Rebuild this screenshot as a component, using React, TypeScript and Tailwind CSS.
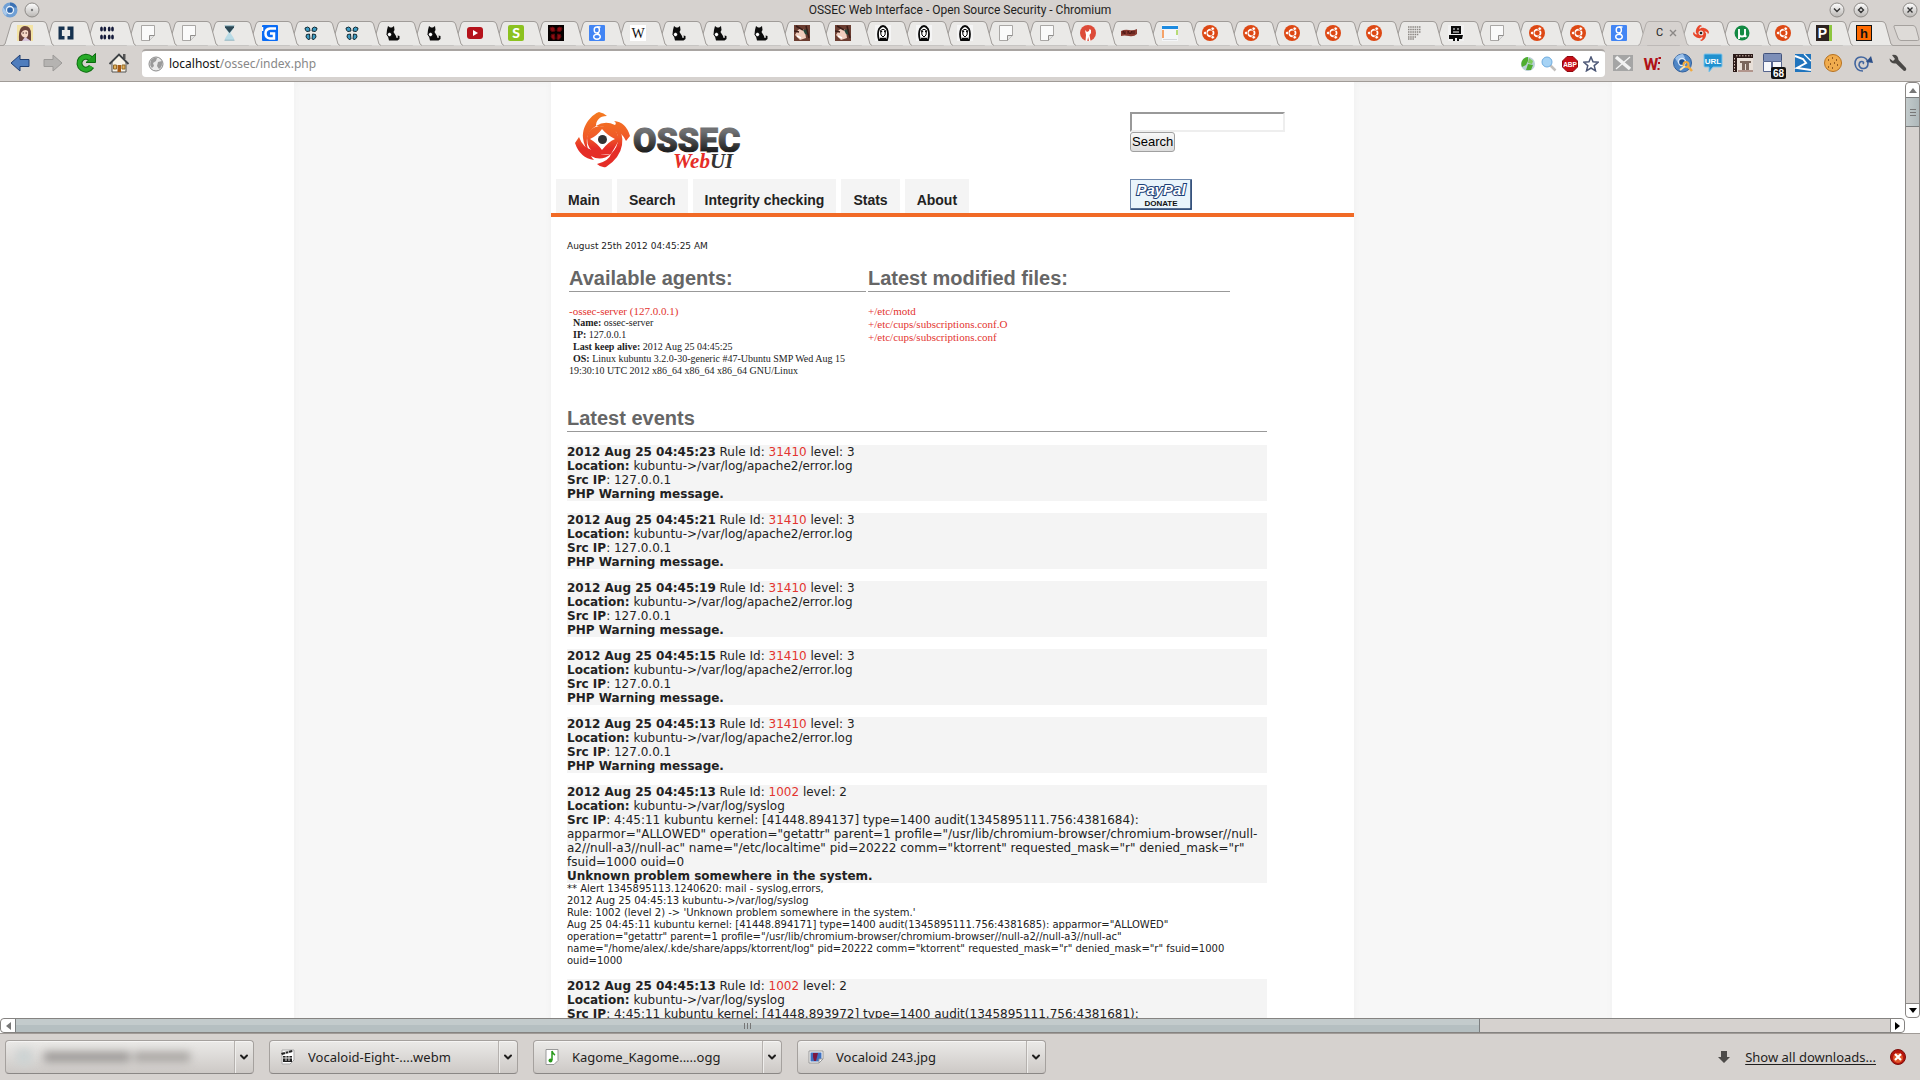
import type { ReactNode } from 'react';
import { ChevronDown } from 'lucide-react';

interface LogEvent {
  time: string;
  rule: string;
  level: number;
  location: string;
  src: string;
  message: string;
  alert?: string[];
}

const APACHE = 'kubuntu->/var/log/apache2/error.log';
const SYSLOG = 'kubuntu->/var/log/syslog';

const phpWarning = (time: string): LogEvent => ({
  time,
  rule: '31410',
  level: 3,
  location: APACHE,
  src: '127.0.0.1',
  message: 'PHP Warning message.',
});

const EVENTS: LogEvent[] = [
  phpWarning('2012 Aug 25 04:45:23'),
  phpWarning('2012 Aug 25 04:45:21'),
  phpWarning('2012 Aug 25 04:45:19'),
  phpWarning('2012 Aug 25 04:45:15'),
  phpWarning('2012 Aug 25 04:45:13'),
  {
    time: '2012 Aug 25 04:45:13',
    rule: '1002',
    level: 2,
    location: SYSLOG,
    src: '4:45:11 kubuntu kernel: [41448.894137] type=1400 audit(1345895111.756:4381684): apparmor="ALLOWED" operation="getattr" parent=1 profile="/usr/lib/chromium-browser/chromium-browser//null-a2//null-a3//null-ac" name="/etc/localtime" pid=20222 comm="ktorrent" requested_mask="r" denied_mask="r" fsuid=1000 ouid=0',
    message: 'Unknown problem somewhere in the system.',
    alert: [
      '** Alert 1345895113.1240620: mail - syslog,errors,',
      '2012 Aug 25 04:45:13 kubuntu->/var/log/syslog',
      "Rule: 1002 (level 2) -> 'Unknown problem somewhere in the system.'",
      'Aug 25 04:45:11 kubuntu kernel: [41448.894171] type=1400 audit(1345895111.756:4381685): apparmor="ALLOWED" operation="getattr" parent=1 profile="/usr/lib/chromium-browser/chromium-browser//null-a2//null-a3//null-ac" name="/home/alex/.kde/share/apps/ktorrent/log" pid=20222 comm="ktorrent" requested_mask="r" denied_mask="r" fsuid=1000 ouid=1000',
    ],
  },
  {
    time: '2012 Aug 25 04:45:13',
    rule: '1002',
    level: 2,
    location: SYSLOG,
    src: '4:45:11 kubuntu kernel: [41448.893972] type=1400 audit(1345895111.756:4381681):',
    message: 'Unknown problem somewhere in the system.',
  },
];

const NAV = ['Main', 'Search', 'Integrity checking', 'Stats', 'About'];

const MODIFIED = ['+/etc/motd', '+/etc/cups/subscriptions.conf.O', '+/etc/cups/subscriptions.conf'];

const AGENT = [
  ['Name:', 'ossec-server'],
  ['IP:', '127.0.0.1'],
  ['Last keep alive:', '2012 Aug 25 04:45:25'],
  ['OS:', 'Linux kubuntu 3.2.0-30-generic #47-Ubuntu SMP Wed Aug 15 19:30:10 UTC 2012 x86_64 x86_64 x86_64 GNU/Linux'],
];

const TABS = [
  'girl', 'brackets', 'dots', 'doc', 'doc', 'hourglass', 'gblue', 'clover', 'clover', 'cat', 'cat', 'video',
  'slime', 'redclover', 'google', 'wiki', 'cat', 'cat', 'cat', 'brunette', 'brunette', 'ghost', 'ghost', 'ghost',
  'doc', 'doc', 'redball', 'jam', 'calendar', 'ubuntu', 'ubuntu', 'ubuntu', 'ubuntu', 'ubuntu', 'graytext', 'robot',
  'doc', 'ubuntu', 'ubuntu', 'google', 'active', 'ossec', 'utorrent', 'ubuntu', 'pnote', 'hnote',
];

function Swirl() {
  return (
    <>
      {[0, 90, 180, 270].map((deg) => (
        <path
          key={deg}
          transform={`rotate(${deg} 28 28)`}
          d="M10 26 C9 12 18 2 25 0 Q30 1 32 4 C25 4 22 9 22 15 Q27 11 35 13 Q45 16 46 24 C40 18 32 16 26 19 Q19 21 18 30 Q13 33 10 26 Z"
        />
      ))}
    </>
  );
}

const CLOVER = (
  <>
    <path d="M2 3 Q5 1 6.500 3 L7 6 L4 6.500 Q2 6 2 3Z M14 3 Q11 1 9.500 3 L9 6 L12 6.500 Q14 6 14 3Z" />
    <path d="M3.500 9.500 L6.500 9 L7 14 L5 14.500 L3 12Z M12.500 9.500 L9.500 9 L9 14 L11 14.500 L13 12Z" />
  </>
);

const FAVICONS: Record<string, ReactNode> = {
  girl: (
    <>
      <rect width="16" height="16" fill="#f3e3a4" />
      <path d="M2 16 Q1 1 8 1 Q14 1 14 9 L14 16Z" fill="#6b443c" />
      <path d="M4 8 Q7 3 11 6 Q12 11 9 13 Q4 12 4 8Z" fill="#f6d9c6" />
      <path d="M5 16 L8 12 L14 16Z" fill="#d9c9dd" />
      <path d="M5.500 8h1.500M8.500 8h1.500" stroke="#4a2a26" />
    </>
  ),
  brackets: (
    <path d="M6.500 3.200H2.200v9.600h4.300M9.500 3.200h4.300v9.600H9.500" fill="none" stroke="#16324f" strokeWidth="3.400" />
  ),
  dots: (
    <g fill="#141a3a">
      {[2.5, 5.800, 10.200, 13.500].map((x) => (
        <g key={x}>
          <ellipse cx={x} cy="4" rx="1.400" ry="2.500" />
          <ellipse cx={x} cy="12" rx="1.400" ry="2.500" />
        </g>
      ))}
    </g>
  ),
  doc: (
    <>
      <path d="M1.500 .5h13v10l-5 5h-8z" fill="#fafafa" stroke="#a9a7a5" />
      <path d="M14.500 10.500h-5v5" fill="#e4e4e4" stroke="#8f8d8b" />
    </>
  ),
  hourglass: (
    <>
      <path d="M4 1h9v1.500L9.500 8 13 13.500V15H4v-1.500L7.500 8 4 2.500z" fill="#b9dbe6" />
      <path d="M4 1h9v1.500L8.500 8 4 2.500z" fill="#2c4855" />
      <path d="M3.500 .8h10M3.500 15.200h10" stroke="#8fb4c0" />
    </>
  ),
  gblue: (
    <>
      <rect width="16" height="16" rx="1" fill="#0a6cf5" />
      <path d="M14 3.500H8Q3.500 4 3.500 8.500T8 13.500h4V8.500H8M0 6V2" fill="none" stroke="#fff" strokeWidth="2.500" />
    </>
  ),
  clover: <g fill="#3d9cc4" stroke="#132a33">{CLOVER}</g>,
  redclover: (
    <>
      <rect width="16" height="16" fill="#050000" />
      <g fill="#8c0d12" stroke="#5c060a">{CLOVER}</g>
    </>
  ),
  cat: (
    <>
      <path d="M3 1l2 1.500h2L9 1l.5 4-1 2 2.500 4 .5 2 1.500-.5-.5-2 2 .5v3l-2 1.500H4l-1-4-1.500-2L2 5z" fill="#0b0b0b" />
      <circle cx="4.500" cy="9.500" r="2.200" fill="#fff" stroke="#0b0b0b" />
    </>
  ),
  video: (
    <>
      <rect y="2" width="16" height="12" rx="3" fill="#b5121b" />
      <path d="M6 5l5 3-5 3z" fill="#fff" />
    </>
  ),
  slime: (
    <>
      <rect width="16" height="16" rx="2" fill="#8cc220" />
      <text x="8" y="13" textAnchor="middle" fontSize="14" fontWeight="900" fill="#fff" fontFamily="Lato, sans-serif">S</text>
    </>
  ),
  google: (
    <>
      <rect width="16" height="16" rx="1" fill="#4285f4" />
      <g fill="none" stroke="#fff" strokeWidth="1.400">
        <ellipse cx="7.800" cy="5" rx="2.600" ry="3" />
        <ellipse cx="8" cy="11.800" rx="3.300" ry="2.400" />
        <path d="M8 2h3.500M8 8q2 1 2.500 2" />
      </g>
    </>
  ),
  wiki: (
    <>
      <rect width="16" height="16" fill="#fff" />
      <text x="8" y="13" textAnchor="middle" fontSize="14" fill="#111" fontFamily="Liberation Serif, serif">W</text>
    </>
  ),
  brunette: (
    <>
      <rect width="16" height="16" fill="#6b3d31" />
      <path d="M4 5 Q8 2 11 6 L12 13 6 15 1 10Z" fill="#f0cdbd" />
      <path d="M9 5l5-1 0 6-3-1z" fill="#27463a" />
      <path d="M2 1l7 4M0 6l5 1M12 1l3 12" stroke="#3a1d18" strokeWidth="1.500" />
      <path d="M3 11l4 2" stroke="#fff" strokeWidth="1.500" />
    </>
  ),
  ghost: (
    <>
      <rect width="16" height="16" fill="#f5f5f5" />
      <path d="M4 4 Q8-2 12 4 Q14 9 12 15H4Q2 9 4 4Z" fill="#fff" stroke="#080808" strokeWidth="1.800" />
      <path d="M5.500 5.500 Q8 3 10.500 5.500 L10 10 8 12 6 10z" fill="#fff" stroke="#080808" />
      <path d="M6 6.500h1.200M9 6.500h1.200M5 13.500h6" stroke="#080808" strokeWidth="1.400" />
    </>
  ),
  redball: (
    <>
      <circle cx="8" cy="8" r="8" fill="#dd4b39" />
      <path d="M5 5l2 2 2-1 .5-2 1.500 1v3l-1.500 2 1 6H9l-.800-4-1 4H5.500l.5-6z" fill="#fff" />
    </>
  ),
  jam: (
    <>
      <path d="M0 6q4-2 8-1t8-1v5q-3 3-8 2t-8 0z" fill="#8a3a30" />
      <path d="M2 9V6l2 3V6M7 9V6l2 3 2-3v3M13 6v3" stroke="#4a1512" fill="none" />
    </>
  ),
  calendar: (
    <>
      <rect width="16" height="16" fill="#f4f6f8" />
      <rect y="1" width="16" height="3" fill="#1d8be0" />
      <rect y="5" width="2" height="8" fill="#f5a36a" />
      <rect x="14" y="5" width="2" height="5" fill="#b7dc78" />
      <path d="M1 14.500h14" stroke="#d3d6da" />
    </>
  ),
  ubuntu: (
    <>
      <circle cx="8" cy="8" r="8" fill="#dd4814" />
      <circle cx="8.300" cy="8" r="3.300" fill="none" stroke="#fff" strokeWidth="1.700" />
      <g fill="#fff" stroke="#dd4814" strokeWidth=".8">
        <circle cx="3.200" cy="8" r="1.800" />
        <circle cx="10.700" cy="3.700" r="1.800" />
        <circle cx="10.700" cy="12.300" r="1.800" />
      </g>
    </>
  ),
  graytext: (
    <path d="M1 2h13M1 4.500h13M1 7h13M1 9.500h11M1 12h8M1 14h6" stroke="#8a8682" strokeWidth="1.300" strokeDasharray="1.500 .7" />
  ),
  robot: (
    <>
      <rect width="16" height="16" fill="#f1f1f1" />
      <path d="M3 1h10v8H3zM1 10h14l-1 4h-3v2h-2v-3H7v3H5v-2H1z" fill="#0a0a0a" />
      <path d="M5 4h2M9 4h2M5 7h6" stroke="#fff" strokeWidth="1.200" />
    </>
  ),
  ossec: (
    <g fill="#e8472b">
      <g transform="scale(.285)"><Swirl /></g>
      <circle cx="8" cy="8" r="1.300" fill="#222" />
    </g>
  ),
  utorrent: (
    <>
      <circle cx="8" cy="8" r="7.500" fill="#138a43" />
      <path d="M5 4v5q0 2.500 3 2.500t3-2.500V4M5 9v5M11 10l1 2" fill="none" stroke="#fff" strokeWidth="1.900" />
    </>
  ),
  pnote: (
    <>
      <rect width="13" height="16" fill="#2c2320" />
      <rect x="13" width="3" height="16" fill="#8dc63f" />
      <text x="6.500" y="13" textAnchor="middle" fontSize="14" fontWeight="700" fill="#fff" fontFamily="Liberation Sans, sans-serif">P</text>
    </>
  ),
  hnote: (
    <>
      <rect x=".5" y=".5" width="15" height="15" fill="#ff6a00" stroke="#111" />
      <text x="8" y="13" textAnchor="middle" fontSize="13" fontWeight="700" fill="#111" fontFamily="Liberation Sans, sans-serif">h</text>
    </>
  ),
};

const GLOBE_LAND = 'M3 4 Q6 1 9 2 L8 5 5 7 6 10 4 12 Q1 9 3 4Z M10 6l4-1q1 5-3 8l-2-3z';

const TOOL_ICONS: Record<string, ReactNode> = {
  back: (
    <path d="M1 10 L10 2v4.500h9v7h-9V18z" fill="#4f7dbd" stroke="#1f3f73" strokeLinejoin="round" />
  ),
  forward: (
    <path d="M19 10 L10 2v4.500H1v7h9V18z" fill="#b5b3b1" stroke="#9c9a98" strokeLinejoin="round" />
  ),
  reload: (
    <>
      <path d="M15.500 13.500 A6.500 6.500 0 1 1 14.500 5.500" fill="none" stroke="#0d6b10" strokeWidth="6" />
      <path d="M10 9.500h9.500V.5z" fill="#1b9a1e" stroke="#0d6b10" />
      <path d="M15.500 13.500 A6.500 6.500 0 1 1 14.500 5.500" fill="none" stroke="#27ab28" strokeWidth="4" />
    </>
  ),
  home: (
    <>
      <rect x="14" y="1" width="2.500" height="5" fill="#555" />
      <path d="M3 9 L10 2l7 7v10H3z" fill="#f6f2e8" stroke="#555" />
      <path d="M.5 11 L10 1.500 19.500 11" fill="none" stroke="#3f4347" strokeWidth="1.800" />
      <rect x="8.500" y="12" width="3.500" height="7" fill="#a65a15" />
      <path d="M4.500 12h3v4h-3zM13 12h3v4h-3z" fill="#e8b25a" stroke="#8f6a2a" />
    </>
  ),
  xmark: (
    <>
      <rect y="2" width="20" height="16" fill="#a5a5a5" />
      <path d="M3 4l14 12" stroke="#f3f3f3" strokeWidth="3.500" />
      <path d="M17 4L3 16" stroke="#f3f3f3" strokeWidth="1.300" />
    </>
  ),
  wred: (
    <>
      <text x="8" y="17" textAnchor="middle" fontSize="17" fontWeight="700" fill="#b01217" fontFamily="Roboto, sans-serif">W</text>
      <path d="M15.500 5h2.500M15 10h2M14.500 16h2" stroke="#b01217" strokeWidth="2.200" />
    </>
  ),
  chromekey: (
    <>
      <circle cx="9.500" cy="10" r="9" fill="#4f86c6" stroke="#2f5f9c" />
      <path d="M2 5Q6 1 10 1l2 4-7 5z" fill="#9cc1ea" />
      <circle cx="9" cy="9" r="3.500" fill="#1d4e8f" stroke="#dceafa" strokeWidth="1.300" />
      <circle cx="13" cy="11.500" r="2.500" fill="none" stroke="#f2a93b" strokeWidth="2" />
      <path d="M14.500 13l4.500 5" stroke="#f2a93b" strokeWidth="2.500" />
      <path d="M12 13l-5 4" stroke="#f6e2b6" strokeWidth="2" />
    </>
  ),
  url: (
    <>
      <path d="M2 1h16q1 0 1 1v11q0 1-1 1h-8l-4 5v-5H2q-1 0-1-1V2q0-1 1-1z" fill="#2191cf" stroke="#7cc3ea" />
      <text x="10" y="11" textAnchor="middle" fontSize="8" fontWeight="700" fill="#fff" fontFamily="Liberation Sans, sans-serif">URL</text>
    </>
  ),
  film: (
    <>
      <rect y="1" width="20" height="18" fill="#e9e0d8" />
      <path d="M0 1h20v4H4v14H0z" fill="#2b1a18" />
      <path d="M1.500 5v13M3 2.800h16" stroke="#d9c3b8" strokeDasharray="1.500 1.500" />
      <path d="M7 8h11v2h-2v7h-3v-6h-1v6H9v-7H7z" fill="#7a675d" />
      <path d="M5 18h15" stroke="#7a4a40" />
    </>
  ),
  tabcount: (
    <>
      <rect x=".5" y=".5" width="18" height="8" rx="1" fill="#7d8fb8" stroke="#43537c" />
      <path d="M.5 8.500h8v10h-8zM9.500 8.500h9v8h-9z" fill="#f7f8fb" stroke="#56658e" />
      <rect x="8" y="14" width="15" height="12" rx="2" fill="#111" />
      <text x="15.500" y="23.500" textAnchor="middle" fontSize="10" fontWeight="700" fill="#fff" fontFamily="Liberation Sans, sans-serif">68</text>
    </>
  ),
  sigma: (
    <>
      <rect x="2" y="1" width="16" height="18" fill="#1f74bd" />
      <path d="M2 3l8 3 3 4-9 5 14 2" fill="none" stroke="#fff" strokeWidth="2" />
      <path d="M11 1l7 7" stroke="#fff" strokeWidth="1.300" />
    </>
  ),
  cookie: (
    <>
      <circle cx="10" cy="10" r="8.500" fill="#f0ac4e" stroke="#b8721f" />
      <path d="M5 7h1M9 5h1M13 7h1M7 11h1M11 10h1M14 12h1M9 15h1M5 14h1" stroke="#7a4312" strokeWidth="1.500" />
    </>
  ),
  spiral: (
    <>
      <path d="M10 11q1.500-2-1-2.500T6 12q1 4 5 3.500T15 10Q14 4 8 4T2 11q1 7 8 7" fill="none" stroke="#42669f" strokeWidth="1.600" />
      <path d="M13 9l5-6 2 7z" fill="#2c4f88" />
    </>
  ),
  wrench: (
    <path d="M4 2 Q10 1 10.500 7 L18 15 Q19 18 16 18 L8 10.500 Q2 11 1.500 5.500 L5 8 7 6z" fill="#4a4846" />
  ),
};

const EXTENSIONS = [
  ['xmark', 'Marks'], ['wred', 'Words'], ['chromekey', 'Keys'], ['url', 'Shortener'], ['film', 'Pictures'],
  ['tabcount', 'Tab count'], ['sigma', 'Launcher'], ['cookie', 'Cookies'], ['spiral', 'Spiral'],
];

function ToolButton({ icon, label }: { icon: string; label: string }) {
  return (
    <button aria-label={label} className="shrink-0">
      <svg viewBox="0 0 20 20" className="h-5 w-5 overflow-visible">{TOOL_ICONS[icon]}</svg>
    </button>
  );
}

function WindowButton({ label, children }: { label: string; children: ReactNode }) {
  return (
    <button aria-label={label} className="shrink-0">
      <svg viewBox="0 0 16 16" className="h-4 w-4">
        <defs>
          <linearGradient id="knob" x2="0" y2="1">
            <stop offset="0" stopColor="#ffffff" />
            <stop offset="1" stopColor="#b9b6b3" />
          </linearGradient>
        </defs>
        <circle cx="8" cy="8" r="7" fill="url(#knob)" stroke="#8d8a87" />
        <g fill="none" stroke="#333" strokeWidth="1.400">{children}</g>
      </svg>
    </button>
  );
}

function TitleBar() {
  return (
    <div className="flex h-[21px] shrink-0 items-center px-[2px] pb-px">
      <div className="flex flex-1 items-center gap-[6px]">
        <svg viewBox="0 0 16 16" className="h-4 w-4">
          <circle cx="8" cy="8" r="7.500" fill="#6f9fd4" />
          <path d="M8 .5a7.500 7.500 0 0 1 7 5H8z" fill="#3c72b4" />
          <path d="M1 5l4 6-1 3Q-1 10 1 5z" fill="#a9c8ea" />
          <circle cx="8" cy="8" r="3.500" fill="#2f66ab" stroke="#e9f2fb" strokeWidth="1.300" />
        </svg>
        <WindowButton label="Window menu"><circle cx="8" cy="8" r=".5" stroke="#777" /></WindowButton>
      </div>
      <h1 className="font-[Roboto,sans-serif] text-[12px] leading-4 text-[#1f1e1d]">
        OSSEC Web Interface - Open Source Security - Chromium
      </h1>
      <div className="flex flex-1 items-center justify-end gap-2">
        <WindowButton label="Minimize"><path d="M5 6.500l3 3 3-3" /></WindowButton>
        <WindowButton label="Maximize"><path d="M8 5.500l2.500 2.500L8 10.500 5.500 8z" /></WindowButton>
        <span className="w-[17px]" />
        <WindowButton label="Close"><path d="M5.500 5.500l5 5M10.500 5.500l-5 5" /></WindowButton>
      </div>
    </div>
  );
}

function TabStrip() {
  return (
    <div className="flex h-[25px] shrink-0 border-b border-[#a5a19e] pl-[3px]">
      {TABS.map((tab, i) => {
        const active = tab === 'active';
        return (
          <button
            key={i}
            aria-label={active ? 'Current tab' : `Tab ${i + 1}`}
            className="relative flex min-w-0 flex-1 items-center pl-[14px]"
            style={{ zIndex: active ? 60 : TABS.length - i }}
          >
            <svg viewBox="0 0 52 25" className="absolute top-0 left-0 h-[25px] w-[52px]">
              <path
                d="M0 24.500 L2 23 L8 3 Q9 .5 11 .5 H40 Q42.500 .5 43.500 3 L49 23 L51 24.500"
                fill={active ? '#d6d2cf' : '#eae9e7'}
                stroke={active ? '#b3afac' : '#a09c99'}
              />
            </svg>
            {active ? (
              <span className="relative flex items-center gap-[6px] pl-1 font-[Roboto,sans-serif] text-[11px] leading-4 text-[#222]">
                <span>C</span>
                <svg viewBox="0 0 8 8" className="h-2 w-2"><path d="M1 1l6 6M7 1L1 7" stroke="#8b8886" strokeWidth="1.400" /></svg>
              </span>
            ) : (
              <svg viewBox="0 0 16 16" className="relative h-4 w-4 shrink-0">{FAVICONS[tab]}</svg>
            )}
          </button>
        );
      })}
      <button aria-label="New tab" className="flex w-[37px] shrink-0 items-center justify-end">
        <svg viewBox="0 0 28 18" className="h-[18px] w-7">
          <path d="M3 1.500h18q2 0 3 2.500l3 11q0 1.500-1.500 1.500H9q-2 0-3-2.500L2 3q-.5-1.500 1-1.500z" fill="#dedbd8" stroke="#a5a19e" />
        </svg>
      </button>
    </div>
  );
}

function Toolbar() {
  return (
    <div className="flex h-9 shrink-0 items-center border-b border-[#a09b97] pr-3 pb-[2px] pl-[10px]">
      <div className="flex items-center gap-[13px]">
        <ToolButton icon="back" label="Back" />
        <ToolButton icon="forward" label="Forward" />
        <ToolButton icon="reload" label="Reload" />
        <ToolButton icon="home" label="Home" />
      </div>
      <div className="ml-[13px] flex h-7 flex-1 items-center gap-[5px] rounded-sm border-t-2 border-[#a9a5a2] bg-white px-[6px]">
        <svg viewBox="0 0 16 16" className="h-4 w-4 shrink-0">
          <circle cx="8" cy="8" r="7" fill="#e9e9e9" stroke="#8b8b8b" />
          <path d={GLOBE_LAND} fill="#9a9a9a" />
        </svg>
        <div aria-label="Address" className="min-w-0 flex-1 font-['Noto_Sans',sans-serif] text-[12px] leading-4 text-[#888]">
          <span className="text-[#111]">localhost</span>/ossec/index.php
        </div>
        <svg viewBox="0 0 16 16" className="h-4 w-4 shrink-0">
          <circle cx="8" cy="8" r="7" fill="#b9cfd6" />
          <path d="M8 1a7 7 0 0 0-6 10l4-2 2-4zM8 8l5 1-2 5H6z" fill="#4fae2f" />
          <path d="M9 2l4 3-1 3-4-1z" fill="#7dcc5c" />
        </svg>
        <svg viewBox="0 0 16 16" className="h-4 w-4 shrink-0">
          <path d="M9 9l5.500 5.500" stroke="#c3c0bd" strokeWidth="2.500" />
          <circle cx="6" cy="6" r="5" fill="#a6d3f5" stroke="#6facdf" />
        </svg>
        <svg viewBox="0 0 16 16" className="h-4 w-4 shrink-0">
          <path d="M5 .5h6L15.500 5v6L11 15.500H5L.5 11V5z" fill="#c70d16" stroke="#8e0a10" />
          <text x="8" y="10.500" textAnchor="middle" fontSize="6.500" fontWeight="700" fill="#fff" fontFamily="Liberation Sans, sans-serif">ABP</text>
        </svg>
        <button aria-label="Bookmark">
          <svg viewBox="0 0 16 16" className="h-4 w-4">
            <path d="M8 1l2 4.800 5.200.4-4 3.400 1.300 5.200L8 12l-4.500 2.800 1.300-5.200-4-3.400L6 5.800z" fill="#fff" stroke="#4d5877" strokeWidth="1.500" />
          </svg>
        </button>
      </div>
      <div className="ml-2 flex items-center gap-[10px]">
        {EXTENSIONS.map(([icon, label]) => (
          <ToolButton key={icon} icon={icon} label={label} />
        ))}
        <span className="flex pl-[5px]"><ToolButton icon="wrench" label="Settings" /></span>
      </div>
    </div>
  );
}

function Logo() {
  return (
    <svg viewBox="0 0 170 62" className="h-[62px] w-[170px] overflow-visible" role="img" aria-label="OSSEC WebUI">
      <defs>
        <linearGradient id="flame" gradientUnits="userSpaceOnUse" x1="0" y1="0" x2="0" y2="56">
          <stop offset="0" stopColor="#f47b20" />
          <stop offset=".45" stopColor="#f05a28" />
          <stop offset=".65" stopColor="#e52d27" />
          <stop offset="1" stopColor="#e52d27" />
        </linearGradient>
        <linearGradient id="steel" gradientUnits="userSpaceOnUse" x1="0" y1="14" x2="0" y2="40">
          <stop offset=".2" stopColor="#707173" />
          <stop offset="1" stopColor="#1c1c1c" />
        </linearGradient>
      </defs>
      <g fill="url(#flame)">
        <path d="M8 26 C7 12 18 2 24 0 Q29 1 32 4 C24 4 21 9 21 14 Q14 18 12 26 Q11 33 14 39 Q9 35 8 26Z" />
        <path d="M21 14 Q30 8 40 13 Q42 11 39 9 Q51 10 55 24 L51 29 Q47 20 40 19 Q31 14 21 14Z" />
        <path d="M40 13 Q49 20 47 33 Q45 46 31 55 Q26 56 22 52 Q34 49 36 42 Q43 35 43 27 Q43 19 36 15Z" />
        <path d="M36 42 Q26 50 16 44 Q17 46 19 48 Q5 46 0 31 L4 25 Q8 36 17 38 Q25 44 36 42Z" />
        <path d="M12 26 Q13 16 24 14 L36 15 Q45 20 43 30 L36 42 L22 42 Q12 38 12 26Z M27 17 Q22 24 15 27 Q22 31 27 38 Q33 30 40 27 Q32 23 27 17Z" fillRule="evenodd" />
      </g>
      <circle cx="27.500" cy="27.500" r="4.500" fill="#333" />
      <text x="58" y="40" fontSize="34" fontWeight="900" fill="url(#steel)" stroke="url(#steel)" fontFamily="Roboto, sans-serif">OSSEC</text>
      <g fontSize="21" fontStyle="italic" fontWeight="700" fontFamily="Liberation Serif, serif" stroke="#fff" strokeWidth="3" paintOrder="stroke">
        <text x="98" y="56" fill="#e52d27">Web<tspan fill="#333">UI</tspan></text>
      </g>
    </svg>
  );
}

function SiteHeader() {
  return (
    <header className="flex h-[135px] border-b-4 border-[#f16a26]">
      <div className="flex flex-1 flex-col justify-between pl-[5px]">
        <div className="pt-[30px] pl-[19px]"><Logo /></div>
        <nav className="flex gap-[5px]">
          {NAV.map((item) => (
            <a
              key={item}
              href="#"
              className="flex h-[34px] items-center bg-[#f4f4f4] px-3 pt-2 font-['Liberation_Sans',sans-serif] text-[14px] leading-5 font-bold text-[#222]"
            >
              {item}
            </a>
          ))}
        </nav>
      </div>
      <div className="flex w-[224px] flex-col items-start justify-between pt-[30px] pb-[3px]">
        <form className="flex flex-col items-start">
          <input
            type="text"
            aria-label="Search"
            className="h-5 w-[155px] border-2 border-t-[#999] border-r-[#eee] border-b-[#eee] border-l-[#999] bg-white"
          />
          <button
            type="button"
            className="h-5 rounded-[3px] border border-[#a0a0a0] bg-linear-to-b from-[#f8f8f8] to-[#dddddd] px-px font-['Liberation_Sans',sans-serif] text-[13px] leading-4 text-black"
          >
            Search
          </button>
        </form>
        <button aria-label="PayPal Donate">
          <svg viewBox="0 0 62 31" className="h-[31px] w-[62px]">
            <rect x=".5" y=".5" width="61" height="30" fill="#e9f4fb" stroke="#6c86ab" />
            <path d="M1 30h60V1" fill="none" stroke="#24426f" strokeWidth="1.500" />
            <text x="31" y="16" textAnchor="middle" fontSize="15" fontStyle="italic" fontWeight="700" fill="#fff" stroke="#1d3f77" strokeWidth="2" paintOrder="stroke" fontFamily="Liberation Sans, sans-serif">PayPal</text>
            <text x="31" y="27" textAnchor="middle" fontSize="8" fontWeight="700" fill="#111" fontFamily="Liberation Sans, sans-serif">DONATE</text>
          </svg>
        </button>
      </div>
    </header>
  );
}

function Heading({ children }: { children: ReactNode }) {
  return (
    <h2 className="border-b border-[#999] font-['Liberation_Sans',sans-serif] text-[20px] leading-[26px] font-bold text-[#666]">
      {children}
    </h2>
  );
}

function EventRow({ event }: { event: LogEvent }) {
  return (
    <article className="mb-3">
      <div className="bg-[#f4f4f4] text-[12px] leading-[14px]">
        <p>
          <b>{event.time}</b> Rule Id: <a href="#" className="text-[#e3342f]">{event.rule}</a> level: {event.level}
        </p>
        <p><b>Location:</b> {event.location}</p>
        <p><b>Src IP</b>: {event.src}</p>
        <p className="font-bold">{event.message}</p>
      </div>
      {event.alert && (
        <div className="text-[10px] leading-3">
          {event.alert.map((line) => <p key={line}>{line}</p>)}
        </div>
      )}
    </article>
  );
}

function SitePage() {
  return (
    <div className="min-w-0 flex-1 overflow-hidden bg-white">
      <div className="mx-auto max-w-[1318px] bg-[#f7f7f7] shadow-[inset_0_0_6px_#f0f0f0]">
        <div className="mx-auto max-w-[803px] bg-white font-['DejaVu_Sans',sans-serif] text-[#222] shadow-[0_0_6px_#eeeeee]">
          <SiteHeader />
          <main className="max-w-[716px] pl-4">
            <p className="pt-6 text-[9px] leading-[11px]">August 25th 2012 04:45:25 AM</p>
            <div className="flex gap-[2px] pt-[13px] pl-[2px]">
              <section className="w-[297px]">
                <Heading>Available agents:</Heading>
                <div className="pt-[13px] font-['Liberation_Serif',serif] text-[10px] leading-3">
                  <a href="#" className="block text-[11px] leading-3 text-[#e3342f]">-ossec-server (127.0.0.1)</a>
                  {AGENT.map(([label, value]) => (
                    <p key={label} className="pr-4 indent-1"><b>{label}</b> {value}</p>
                  ))}
                </div>
              </section>
              <section className="w-[362px]">
                <Heading>Latest modified files:</Heading>
                <div className="flex flex-col items-start pt-[13px] font-['Liberation_Serif',serif] text-[11px] leading-[13px] text-[#e3342f]">
                  {MODIFIED.map((file) => <a key={file} href="#">{file}</a>)}
                </div>
              </section>
            </div>
            <section className="pt-7">
              <Heading>Latest events</Heading>
              <div className="pt-[13px]">
                {EVENTS.map((event, i) => <EventRow key={i} event={event} />)}
              </div>
            </section>
          </main>
        </div>
      </div>
    </div>
  );
}

function VerticalScrollbar() {
  return (
    <div className="flex w-[15px] shrink-0 flex-col rounded border border-[#8a8785] bg-[#d6d2cf]">
      <button aria-label="Scroll up" className="flex h-[14px] items-center justify-center rounded-t bg-white">
        <svg viewBox="0 0 8 5" className="h-[5px] w-2"><path d="M0 5l4-5 4 5z" fill="#777" /></svg>
      </button>
      <div className="flex h-[30px] flex-col items-center justify-center gap-[2px] border-y border-[#7c7f80] bg-linear-to-r from-[#c3cbcc] to-[#aeb8ba]">
        <span className="h-px w-[6px] bg-[#777]" />
        <span className="h-px w-[6px] bg-[#777]" />
        <span className="h-px w-[6px] bg-[#777]" />
      </div>
      <div className="flex-1" />
      <button aria-label="Scroll down" className="flex h-[14px] items-center justify-center rounded-b border-t border-[#8a8785] bg-white">
        <svg viewBox="0 0 8 5" className="h-[5px] w-2"><path d="M0 0l4 5 4-5z" fill="#000" /></svg>
      </button>
    </div>
  );
}

function HorizontalScrollbar() {
  return (
    <div className="h-4 shrink-0 border-b border-[#a09b97] bg-white pr-[15px]">
      <div className="flex h-[15px] rounded border border-[#858381] bg-[#d6d2cf]">
        <button aria-label="Scroll left" className="flex w-[14px] items-center justify-center rounded-l bg-white">
          <svg viewBox="0 0 5 8" className="h-2 w-[5px]"><path d="M5 0L0 4l5 4z" fill="#777" /></svg>
        </button>
        <div className="flex w-[77%] items-center justify-center gap-[2px] border-x border-[#7c7f80] bg-linear-to-b from-[#c3cbcc] from-50% to-[#b5bfc1] to-50%">
          <span className="h-[6px] w-px bg-[#777]" />
          <span className="h-[6px] w-px bg-[#777]" />
          <span className="h-[6px] w-px bg-[#777]" />
        </div>
        <div className="flex-1" />
        <button aria-label="Scroll right" className="flex w-[14px] items-center justify-center rounded-r border-l border-[#858381] bg-white">
          <svg viewBox="0 0 5 8" className="h-2 w-[5px]"><path d="M0 0l5 4-5 4z" fill="#000" /></svg>
        </button>
      </div>
    </div>
  );
}

function DownloadItem({ label, children }: { label: string; children: ReactNode }) {
  return (
    <div className="flex h-[34px] w-[249px] rounded border border-[#a5a19e] border-b-[#8a8785] bg-linear-to-b from-[#ebeae8] to-[#cdc9c6] shadow-[inset_0_1px_0_#f6f5f4]">
      <button aria-label={label} className="flex min-w-0 flex-1 items-center gap-3 pl-[10px] text-left">
        {children}
      </button>
      <button aria-label={`Options for ${label}`} className="flex w-[19px] items-center justify-center border-l border-[#b5b1ae] shadow-[inset_1px_0_0_#efeeec]">
        <ChevronDown className="h-3 w-3" strokeWidth={4} />
      </button>
    </div>
  );
}

function DownloadShelf() {
  return (
    <div className="flex h-[46px] shrink-0 items-center gap-[15px] px-[5px] font-['Noto_Sans',sans-serif] text-[13px] leading-4 text-[#1f1e1d]">
      <DownloadItem label="Download">
        <span className="h-4 w-4 bg-[#cdd3d3] blur-xs" />
        <span className="flex items-center gap-1 blur-xs">
          <span className="h-[10px] w-[86px] bg-[#9b9896]" />
          <span className="h-[10px] w-[56px] bg-[#a9a6a3]" />
        </span>
      </DownloadItem>
      <DownloadItem label="Vocaloid-Eight-....webm">
        <svg viewBox="0 0 16 16" className="h-4 w-4 shrink-0">
          <path d="M2 1h12v10l-4 4H2z" fill="#fff" stroke="#aaa" />
          <path d="M1 4l11-3 .5 2L2 6zM3 7h9v6H3z" fill="#222" />
          <path d="M3 9h9M6 7v5M9 7v5M5 3l1 2M8 2l1 2" stroke="#ddd" />
        </svg>
        <span className="truncate">Vocaloid-Eight-....webm</span>
      </DownloadItem>
      <DownloadItem label="Kagome_Kagome.....ogg">
        <svg viewBox="0 0 16 16" className="h-4 w-4 shrink-0">
          <path d="M2 .5h12v11l-4 4H2z" fill="#fff" stroke="#999" />
          <path d="M8 2v9M8 2q1 3 3 4" fill="none" stroke="#2a9a1c" strokeWidth="1.500" />
          <circle cx="6.500" cy="11.500" r="2" fill="#2a9a1c" />
        </svg>
        <span className="truncate">Kagome_Kagome.....ogg</span>
      </DownloadItem>
      <DownloadItem label="Vocaloid 243.jpg">
        <svg viewBox="0 0 16 16" className="h-4 w-4 shrink-0">
          <path d="M1 2h14v8l-4 4H1z" fill="#fff" stroke="#999" />
          <path d="M2.500 3.500h11v6l-3 3h-8z" fill="#3d70c0" />
          <path d="M5 4h5l-1 4-1 4H6L5 8z" fill="#7d1740" />
          <path d="M15 10h-4v4z" fill="#fff" stroke="#999" />
        </svg>
        <span className="truncate">Vocaloid 243.jpg</span>
      </DownloadItem>
      <div className="flex flex-1 items-center justify-end gap-[14px] pr-[9px]">
        <svg viewBox="0 0 14 14" className="h-[14px] w-[14px]">
          <path d="M4 1h6v6h3l-6 6-6-6h3z" fill="#4d4b49" />
        </svg>
        <a href="#" className="underline underline-offset-2">Show all downloads...</a>
        <button aria-label="Close downloads">
          <svg viewBox="0 0 16 16" className="h-4 w-4">
            <circle cx="8" cy="8" r="7.500" fill="#b5150e" stroke="#7e0f0a" />
            <circle cx="8" cy="9" r="5" fill="#e0562a" />
            <path d="M5 5l6 6M11 5l-6 6" stroke="#fff" strokeWidth="2.200" />
          </svg>
        </button>
      </div>
    </div>
  );
}

export default function App() {
  return (
    <div className="flex h-screen flex-col overflow-hidden bg-[#d6d2cf]">
      <TitleBar />
      <TabStrip />
      <Toolbar />
      <div className="flex min-h-0 flex-1 bg-white">
        <SitePage />
        <VerticalScrollbar />
      </div>
      <HorizontalScrollbar />
      <DownloadShelf />
    </div>
  );
}
